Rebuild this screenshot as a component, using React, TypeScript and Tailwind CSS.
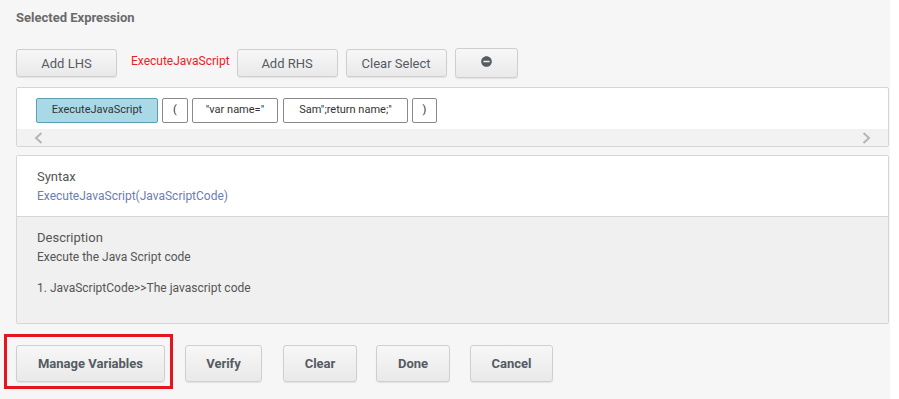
import { FaMinusCircle } from 'react-icons/fa';

const btn =
  'flex items-center justify-center rounded-[3px] border border-[#cfcfcf] bg-gradient-to-b from-[#f7f7f7] to-[#e9e9e9] shadow-[0_1px_1px_rgba(0,0,0,0.08)] text-[#555b63] font-bold';

function Chip({ label, w, active }: { label: string; w: string; active?: boolean }) {
  return (
    <div
      className={`${w} h-[25px] flex items-center justify-center rounded-[2px] border text-[11px] text-[#333] ${
        active ? 'bg-[#a9d9e6] border-[#5d9fb2]' : 'bg-white border-[#8a8a8a]'
      }`}
    >
      {label}
    </div>
  );
}

export default function App() {
  return (
    <div className="w-[899px] h-[399px] flex bg-white overflow-hidden" style={{ fontFamily: 'Roboto, "Liberation Sans", sans-serif' }}>
      <div className="w-[890px] h-full bg-[#f6f6f6] flex flex-col">
        {/* title */}
        <div className="pt-[10px] pl-[16px] text-[13px] leading-[16px] font-bold text-[#6b6b6b]">Selected Expression</div>

        {/* toolbar */}
        <div className="mt-[23px] pl-[16px] flex items-center h-[28px]">
          <button className={`${btn} w-[101px] h-[28px] pt-[2px] text-[13px] font-normal text-[#555]`}>Add LHS</button>
          <span className="ml-[14px] -mt-[5px] text-[12px] text-[#ee1c25]">ExecuteJavaScript</span>
          <button className={`${btn} ml-[7px] w-[101px] h-[28px] pt-[2px] text-[13px] font-normal text-[#555]`}>Add RHS</button>
          <button className={`${btn} ml-[8px] w-[101px] h-[28px] pt-[2px] text-[13px] font-normal text-[#555]`}>Clear Select</button>
          <button className={`${btn} ml-[8px] w-[63px] h-[30px] text-[#333]`}>
            <FaMinusCircle size={11} className="-mt-[3px]" />
          </button>
        </div>

        {/* expression */}
        <div className="mt-[10px] mx-[16px] w-[873px] h-[60px] border border-[#d6d6d6] rounded-[2px] bg-white flex flex-col">
          <div className="pt-[10px] pl-[19px] flex gap-[4px] h-[41px]">
            <Chip label="ExecuteJavaScript" w="w-[122px]" active />
            <Chip label="(" w="w-[26px]" />
            <Chip label={'"var name="'} w="w-[86px]" />
            <Chip label={'Sam";return name;"'} w="w-[125px] ml-[1px]" />
            <Chip label=")" w="w-[25px]" />
          </div>
          <div className="flex-1 bg-[#f2f2f2] flex items-center justify-between px-[17px] text-[#b5b5b5]">
            <svg width="9" height="12" viewBox="0 0 9 12">
              <path d="M7.5 1 L2 6 L7.5 11" fill="none" stroke="currentColor" strokeWidth="2" />
            </svg>
            <svg width="9" height="12" viewBox="0 0 9 12">
              <path d="M1.5 1 L7 6 L1.5 11" fill="none" stroke="currentColor" strokeWidth="2" />
            </svg>
          </div>
        </div>

        {/* syntax / description */}
        <div className="mt-[8px] mx-[16px] w-[873px] h-[169px] border border-[#d6d6d6] rounded-[2px] flex flex-col overflow-hidden">
          <div className="bg-white pt-[13px] pl-[20px] h-[61px] border-b border-[#d6d6d6]">
            <div className="text-[13px] leading-[16px] text-[#555]">Syntax</div>
            <div className="mt-[3px] text-[12px] leading-[16px] text-[#6b7db1]">ExecuteJavaScript(JavaScriptCode)</div>
          </div>
          <div className="flex-1 bg-[#f0f0f0] pt-[13px] pl-[20px]">
            <div className="text-[13px] leading-[16px] text-[#555]">Description</div>
            <div className="mt-[3px] text-[12px] leading-[16px] text-[#555]">Execute the Java Script code</div>
            <div className="mt-[15px] text-[12px] leading-[16px] text-[#555]">1. JavaScriptCode&gt;&gt;The javascript code</div>
          </div>
        </div>

        {/* footer */}
        <div className="mt-[21px] pl-[16px] flex items-center h-[37px] text-[13px]">
          <div className="relative">
            <button className={`${btn} w-[149px] h-[37px]`}>Manage Variables</button>
            <span className="absolute -left-[12px] -top-[11px] -right-[8px] -bottom-[7px] border-[3px] border-[#e5141e] pointer-events-none" />
          </div>
          <button className={`${btn} ml-[20px] w-[77px] h-[37px]`}>Verify</button>
          <button className={`${btn} ml-[21px] w-[74px] h-[37px]`}>Clear</button>
          <button className={`${btn} ml-[19px] w-[74px] h-[37px]`}>Done</button>
          <button className={`${btn} ml-[20px] w-[83px] h-[37px]`}>Cancel</button>
        </div>
      </div>
    </div>
  );
}
